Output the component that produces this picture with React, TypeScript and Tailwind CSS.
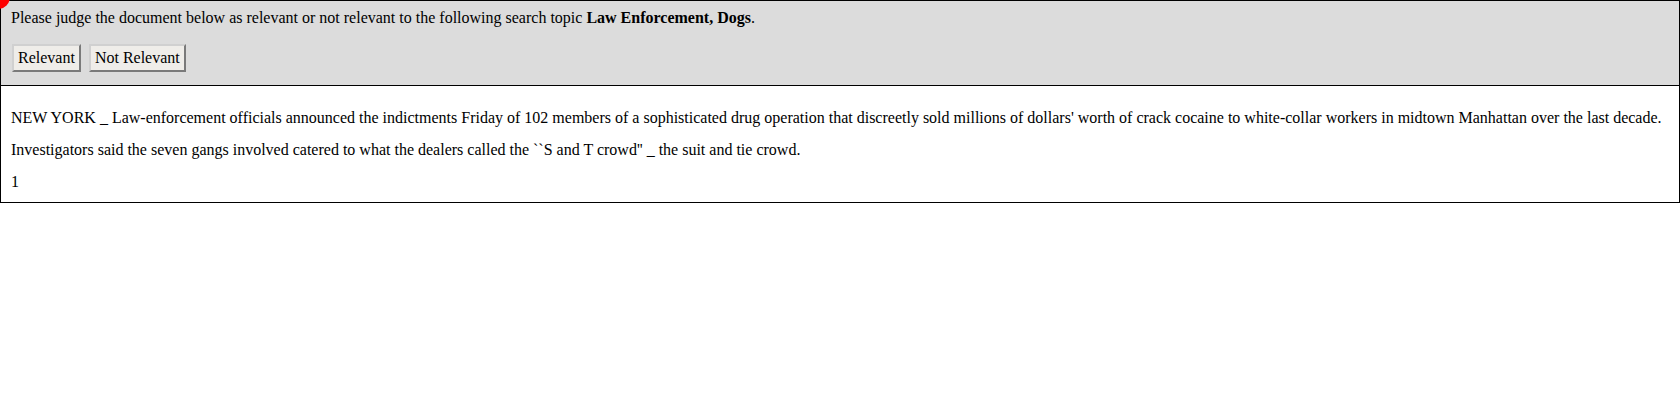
import React from "react";

export default function App() {
  const serif = { fontFamily: '"Liberation Serif", "Times New Roman", serif' };
  return (
    <div className="relative bg-white text-black text-[16px] leading-[20px]" style={serif}>
      <div className="border border-black">
        <div className="bg-[#dcdcdc] border-b border-black pl-[10px] pt-[7px] pb-[13px]">
          <p>
            Please judge the document below as relevant or not relevant to the following search topic{" "}
            <b>Law Enforcement, Dogs</b>.
          </p>
          <div className="flex gap-[8px] mt-[16px] ml-[1px]">
            <button className="h-[28px] px-[4px] bg-[#efede9] border-2 border-t-[#d0d0d0] border-l-[#d0d0d0] border-b-[#7a7a7a] border-r-[#7a7a7a] leading-[20px]">
              Relevant
            </button>
            <button className="h-[28px] px-[4px] bg-[#efede9] border-2 border-t-[#d0d0d0] border-l-[#d0d0d0] border-b-[#7a7a7a] border-r-[#7a7a7a] leading-[20px]">
              Not Relevant
            </button>
          </div>
        </div>
        <div className="pl-[10px] pt-[22px] pb-[10px] flex flex-col gap-[12px]">
          <p>
            NEW YORK _ Law-enforcement officials announced the indictments Friday of 102 members of a sophisticated drug operation that discreetly sold millions of dollars' worth of crack cocaine to white-collar workers in midtown Manhattan over the last decade.
          </p>
          <p>Investigators said the seven gangs involved catered to what the dealers called the ``S and T crowd'' _ the suit and tie crowd.</p>
          <p>1</p>
        </div>
      </div>
      <div className="absolute left-[-14px] top-[-15px] w-[24px] h-[24px] rounded-full bg-[#ff0000]" />
    </div>
  );
}
